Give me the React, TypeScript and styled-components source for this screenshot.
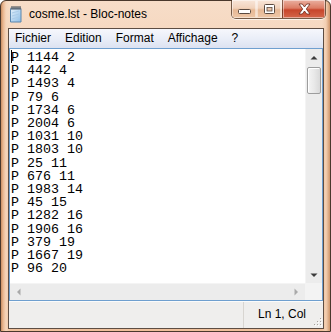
import React from "react";
import styled, { createGlobalStyle } from "styled-components";

const GlobalStyle = createGlobalStyle`
  html, body {
    margin: 0;
    padding: 0;
    background: #ffffff;
    overflow: hidden;
  }
`;

const Window = styled.div`
  width: 331px;
  height: 332px;
  box-sizing: border-box;
  display: flex;
  flex-direction: column;
  padding: 0 6px 2px 7px;
  border: 1px solid #4a382c;
  border-radius: 6px 6px 0 0;
  background: linear-gradient(
      to right,
      #c88d62 0,
      #e9b58e 2px,
      #f6d6bc 5px,
      rgba(246, 214, 188, 0) 9px,
      rgba(246, 214, 188, 0) calc(100% - 8px),
      #f3cfb2 calc(100% - 4px),
      #cf956a 100%
    ),
    linear-gradient(to bottom, #f7ddc8 0, #f2c9a8 40%, #eebf9b 100%);
  font-family: "Liberation Sans", Arial, sans-serif;
`;

const TitleBar = styled.div`
  height: 27px;
  margin: 0 -6px 0 -7px;
  padding-left: 7px;
  display: flex;
  align-items: center;
  flex-shrink: 0;
`;

const Title = styled.span`
  margin-left: 5px;
  font-size: 12px;
  line-height: 27px;
  color: #000;
  white-space: nowrap;
`;

const Spacer = styled.div`
  flex: 1;
`;

const Caption = styled.div`
  align-self: flex-start;
  margin-top: -1px;
  margin-right: 4px;
  display: flex;
  border: 1px solid rgba(74, 48, 30, 0.75);
  border-top: none;
  border-radius: 0 0 5px 5px;
  overflow: hidden;
  box-shadow: 0 1px 0 rgba(255, 255, 255, 0.7);
`;

const CapButton = styled.div<{ $w: number; $close?: boolean }>`
  width: ${(p) => p.$w}px;
  height: 18px;
  box-sizing: border-box;
  display: flex;
  align-items: center;
  justify-content: center;
  border-left: ${(p) => (p.$close ? "1px solid rgba(74,48,30,0.6)" : "none")};
  border-right: ${(p) => (p.$close ? "none" : "1px solid rgba(255,255,255,0.55)")};
  box-shadow: inset 0 0 0 1px rgba(255, 255, 255, 0.45);
  background: ${(p) =>
    p.$close
      ? "linear-gradient(to bottom, #eab0a0 0, #dc7c64 45%, #c7452b 55%, #d4664a 100%)"
      : "linear-gradient(to bottom, #f8e6d9 0, #f1d2bb 45%, #e6b895 55%, #eec7a7 100%)"};
`;

const Client = styled.div`
  flex: 1;
  display: flex;
  flex-direction: column;
  border: 1px solid #5d4d43;
  background: #f0f0f0;
  min-height: 0;
`;

const MenuBar = styled.div`
  height: 19px;
  flex-shrink: 0;
  display: flex;
  gap: 14px;
  padding-left: 6px;
  background: linear-gradient(to bottom, #f6f7fc 0, #eaeef8 50%, #dce2f1 100%);
`;

const MenuItem = styled.span`
  font-size: 12px;
  line-height: 19px;
  color: #000;
`;

const EditBox = styled.div`
  flex: 1;
  display: flex;
  flex-direction: column;
  border: 1px solid #6f9fcf;
  background: #fff;
  min-height: 0;
`;

const EditRow = styled.div`
  flex: 1;
  display: flex;
  min-height: 0;
`;

const TextArea = styled.div`
  flex: 1;
  padding: 1px 0 0 1px;
  font-family: "Liberation Mono", "Courier New", monospace;
  font-size: 13.33px;
  line-height: 13.2px;
  color: #000;
  white-space: pre;
  overflow: hidden;
`;

const Caret = styled.span`
  display: inline-block;
  width: 1px;
  height: 13px;
  margin-right: -1px;
  vertical-align: -2px;
  background: #000;
`;

const VScroll = styled.div`
  width: 17px;
  display: flex;
  flex-direction: column;
  background: #ececec;
  border-left: 1px solid #f4f4f4;
  box-sizing: border-box;
`;

const ArrowBox = styled.div`
  height: 17px;
  display: flex;
  align-items: center;
  justify-content: center;
  flex-shrink: 0;
`;

const Thumb = styled.div`
  margin: 1px 1px 0 1px;
  height: 25px;
  border: 1px solid #9d9d9d;
  border-radius: 2px;
  background: linear-gradient(to right, #f4f4f4 0, #e9e9e9 50%, #d9d9d9 100%);
  box-shadow: inset 1px 1px 0 #fff;
`;

const Track = styled.div`
  flex: 1;
`;

const HRow = styled.div`
  height: 17px;
  display: flex;
  flex-shrink: 0;
`;

const HScroll = styled.div`
  flex: 1;
  display: flex;
  justify-content: space-between;
  align-items: center;
  background: #ececec;
  border-top: 1px solid #f4f4f4;
  padding: 0 6px;
`;

const Corner = styled.div`
  width: 17px;
  background: #f3f3f3;
`;

const StatusBar = styled.div`
  height: 27px;
  flex-shrink: 0;
  display: flex;
  align-items: stretch;
  background: #efeeed;
  border-top: 1px solid #fbfbfb;
  box-sizing: border-box;
`;

const StatusPane = styled.div<{ $grow?: boolean }>`
  flex: ${(p) => (p.$grow ? 1 : "none")};
  width: ${(p) => (p.$grow ? "auto" : "70px")};
  box-sizing: border-box;
  padding-left: ${(p) => (p.$grow ? 0 : "14px")};
  border-right: ${(p) => (p.$grow ? "1px solid #d8d5d1" : "none")};
  font-size: 12px;
  line-height: 25px;
  color: #000;
  white-space: nowrap;
  overflow: hidden;
`;

const Grip = styled.div`
  width: 9px;
  display: flex;
  align-items: flex-end;
  padding-bottom: 2px;
`;

const lines = [
  "P 1144 2",
  "P 442 4",
  "P 1493 4",
  "P 79 6",
  "P 1734 6",
  "P 2004 6",
  "P 1031 10",
  "P 1803 10",
  "P 25 11",
  "P 676 11",
  "P 1983 14",
  "P 45 15",
  "P 1282 16",
  "P 1906 16",
  "P 379 19",
  "P 1667 19",
  "P 96 20",
];

const menus = ["Fichier", "Edition", "Format", "Affichage", "?"];

const NotepadIcon = () => (
  <svg width="16" height="17" viewBox="0 0 16 17">
    <defs>
      <linearGradient id="pg" x1="0" y1="0" x2="1" y2="1">
        <stop offset="0" stopColor="#e4f1fb" />
        <stop offset="1" stopColor="#8dbde6" />
      </linearGradient>
    </defs>
    <path d="M2.5 2.5h10.5v13.5h-10.5z" fill="url(#pg)" stroke="#5b86ad" />
    <path d="M4 7l7-2M4 10l7-2M4 13l7-2" stroke="#aacbe8" strokeWidth="1" />
    <rect x="2.5" y="1.5" width="10.5" height="2" fill="#8a98a6" />
    {[4, 6, 8, 10, 12].map((x) => (
      <rect key={x} x={x - 0.5} y="0" width="1" height="3.5" fill="#3d4650" />
    ))}
  </svg>
);

const MinGlyph = () => (
  <svg width="13" height="18" viewBox="0 0 13 18">
    <rect x="0.5" y="9.5" width="12" height="4" rx="1" fill="#fff" stroke="#5a4a40" />
  </svg>
);

const MaxGlyph = () => (
  <svg width="11" height="18" viewBox="0 0 11 18">
    <rect x="0.5" y="4.5" width="10" height="9" rx="1" fill="#fff" stroke="#5a4a40" />
    <rect x="3" y="7.5" width="5" height="3.5" fill="#e7c3a8" stroke="#5a4a40" strokeWidth="0.8" />
  </svg>
);

const CloseGlyph = () => (
  <svg width="13" height="18" viewBox="0 0 13 18">
    <path
      d="M1 4h3.3l2.2 3 2.2-3H12l-3.7 5 3.7 5H8.7l-2.2-3-2.2 3H1l3.7-5z"
      fill="#fff"
      stroke="#6b2a1c"
      strokeWidth="0.8"
      strokeLinejoin="round"
    />
  </svg>
);

const Tri = ({ dir, color }: { dir: "up" | "down" | "left" | "right"; color: string }) => {
  const d = {
    up: "M0.5 4.5L4 1l3.5 3.5z",
    down: "M0.5 1.5h7L4 5z",
    left: "M4.5 0.5v7L1 4z",
    right: "M1.5 0.5v7L5 4z",
  }[dir];
  const vertical = dir === "up" || dir === "down";
  return (
    <svg width={vertical ? 8 : 6} height={vertical ? 6 : 8} viewBox={vertical ? "0 0 8 6" : "0 0 6 8"}>
      <path d={d} fill={color} />
    </svg>
  );
};

const GripDots = () => (
  <svg width="8" height="8" viewBox="0 0 8 8">
    {[
      [6, 0],
      [6, 3],
      [3, 3],
      [6, 6],
      [3, 6],
      [0, 6],
    ].map(([x, y]) => (
      <g key={`${x}-${y}`}>
        <rect x={x + 1} y={y + 1} width="1" height="1" fill="#fff" />
        <rect x={x} y={y} width="1" height="1" fill="#a7a29c" />
      </g>
    ))}
  </svg>
);

export default function App() {
  return (
    <>
      <GlobalStyle />
      <Window>
        <TitleBar>
          <NotepadIcon />
          <Title>cosme.lst - Bloc-notes</Title>
          <Spacer />
          <Caption>
            <CapButton $w={25}>
              <MinGlyph />
            </CapButton>
            <CapButton $w={25}>
              <MaxGlyph />
            </CapButton>
            <CapButton $w={43} $close>
              <CloseGlyph />
            </CapButton>
          </Caption>
        </TitleBar>
        <Client>
          <MenuBar>
            {menus.map((m) => (
              <MenuItem key={m}>{m}</MenuItem>
            ))}
          </MenuBar>
          <EditBox>
            <EditRow>
              <TextArea>
                {lines.map((l, i) => (
                  <div key={i}>
                    {i === 0 && <Caret />}
                    {l}
                  </div>
                ))}
              </TextArea>
              <VScroll>
                <ArrowBox>
                  <Tri dir="up" color="#3c3c3c" />
                </ArrowBox>
                <Thumb />
                <Track />
                <ArrowBox>
                  <Tri dir="down" color="#3c3c3c" />
                </ArrowBox>
              </VScroll>
            </EditRow>
            <HRow>
              <HScroll>
                <Tri dir="left" color="#a9a9a9" />
                <Tri dir="right" color="#a9a9a9" />
              </HScroll>
              <Corner />
            </HRow>
          </EditBox>
          <StatusBar>
            <StatusPane $grow />
            <StatusPane>Ln 1, Col</StatusPane>
            <Grip>
              <GripDots />
            </Grip>
          </StatusBar>
        </Client>
      </Window>
    </>
  );
}
